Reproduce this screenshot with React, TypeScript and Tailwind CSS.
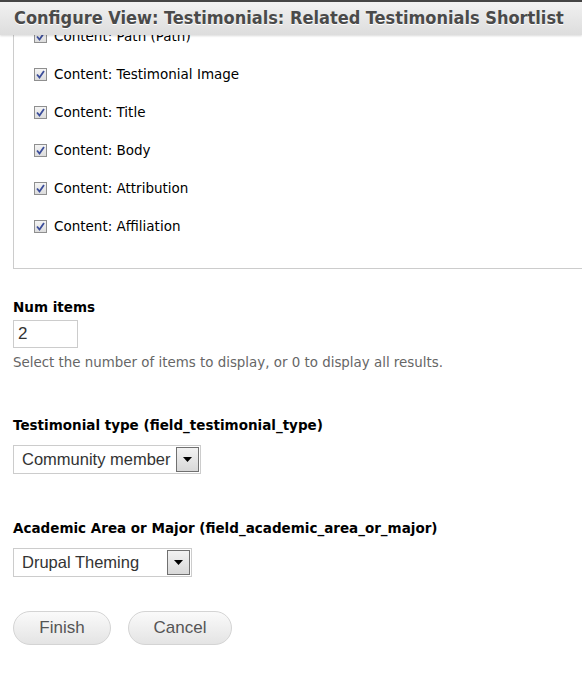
import { ChangeEvent, useState } from "react";

const fields = [
  "Content: Path (Path)",
  "Content: Testimonial Image",
  "Content: Title",
  "Content: Body",
  "Content: Attribution",
  "Content: Affiliation",
];

function Check({ label }: { label: string }) {
  return (
    <label className="flex h-[38px] items-center">
      <span className="flex h-[13px] w-[13px] items-center justify-center border border-[#8f8f8f] bg-gradient-to-b from-[#f4f4f4] to-[#dcdcdc]">
        <svg width="9" height="9" viewBox="0 0 9 9">
          <path d="M1 4.5 L3.5 7.5 L8 1" stroke="#3b4d9a" strokeWidth="1.8" fill="none" />
        </svg>
      </span>
      <span className="ml-[7px] text-[13.5px] text-black">{label}</span>
    </label>
  );
}

function Select({ value, width }: { value: string; width: string }) {
  return (
    <div
      className={`flex h-[29px] items-center justify-between border border-[#ccc] bg-white pl-2 pr-[1px] ${width}`}
    >
      <span className="whitespace-nowrap font-['Liberation_Sans',Arial,sans-serif] text-[16.5px] text-[#333]">{value}</span>
      <span className="flex h-[25px] w-[23px] shrink-0 items-center justify-center border border-[#707070] bg-gradient-to-b from-[#f2f2f2] to-[#d8d8d8]">
        <svg width="9" height="5" viewBox="0 0 9 5">
          <path d="M0 0 H9 L4.5 5 Z" fill="#000" />
        </svg>
      </span>
    </div>
  );
}

export default function App() {
  const [num, setNum] = useState("2");
  return (
    <main className="relative h-[677px] w-[582px] overflow-hidden bg-white font-['DejaVu_Sans',Verdana,sans-serif]">
      <header className="absolute left-0 top-0 z-10 h-[35px] w-full border-t-2 border-[#444] bg-gradient-to-b from-[#f1f1f1] to-[#dddddd] pl-[14px] shadow-[0_1px_2px_rgba(0,0,0,0.15)]">
        <h1 className="whitespace-nowrap pt-[3px] text-[18px] font-bold leading-[26px] font-stretch-condensed text-[#4a4a4a] [text-shadow:0_1px_0_#fff]">
          Configure View: Testimonials: Related Testimonials Shortlist
        </h1>
      </header>

      <div className="pl-[13px]">
        <fieldset className="border-b border-l border-[#ccc] pb-[23px] pl-[20px] pt-[17px]">
          {fields.map((f) => (
            <Check key={f} label={f} />
          ))}
        </fieldset>

        <div className="mt-[28px]">
          <div className="text-[13.5px] font-bold leading-[20px] text-black">Num items</div>
          <input
            value={num}
            onChange={(e: ChangeEvent<HTMLInputElement>) => setNum(e.target.value)}
            className="mt-[3px] h-[28px] w-[65px] border border-[#ccc] px-[4px] font-['Liberation_Sans',Arial,sans-serif] text-[17px] text-[#333] outline-none"
          />
          <p className="mt-[5px] text-[13.4px] leading-[20px] text-[#666]">
            Select the number of items to display, or 0 to display all results.
          </p>
        </div>

        <div className="mt-[42px]">
          <div className="text-[13.5px] font-bold leading-[20px] text-black">
            Testimonial type (field_testimonial_type)
          </div>
          <div className="mt-[10px]">
            <Select value="Community member" width="w-[188px]" />
          </div>
        </div>

        <div className="mt-[44px]">
          <div className="text-[13.5px] font-bold leading-[20px] text-black">
            Academic Area or Major (field_academic_area_or_major)
          </div>
          <div className="mt-[10px]">
            <Select value="Drupal Theming" width="w-[179px]" />
          </div>
        </div>

        <div className="mt-[34px] flex gap-[17px]">
          <button className="h-[34px] w-[98px] rounded-full border border-[#d4d4d4] bg-gradient-to-b from-[#fafafa] to-[#e4e4e4] font-['Liberation_Sans',Arial,sans-serif] text-[17px] text-[#555]">
            Finish
          </button>
          <button className="h-[34px] w-[104px] rounded-full border border-[#d4d4d4] bg-gradient-to-b from-[#fafafa] to-[#e4e4e4] font-['Liberation_Sans',Arial,sans-serif] text-[17px] text-[#555]">
            Cancel
          </button>
        </div>
      </div>
    </main>
  );
}
